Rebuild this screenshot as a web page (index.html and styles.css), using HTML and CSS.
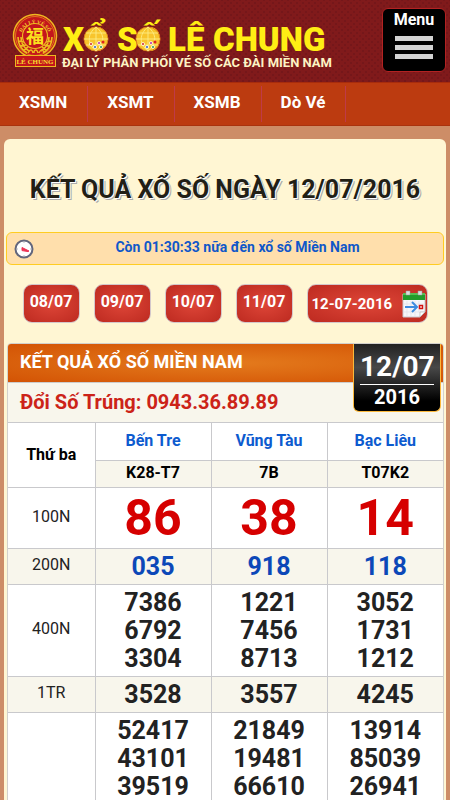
FILE: index.html
```html
<!DOCTYPE html>
<html lang="vi">

<head>
    <meta charset="UTF-8">
    <meta name="viewport" content="width=device-width, initial-scale=1.0">
    <title>Xổ Số Lê Chung</title>
    <link rel="stylesheet" href="styles.css">
</head>

<body>
    <header class="header">
        <a href="#" class="logo">
            <svg width="316" height="62" viewBox="0 0 316 62">
                <!-- seal -->
                <g fill="none" stroke="#edb91f">
                    <circle cx="23" cy="23" r="21.5" fill="#c4161c" stroke-width="1.5"/>
                    <circle cx="23" cy="23" r="19.5" stroke-width="0.6"/>
                    <circle cx="23" cy="23" r="12.5" stroke-width="1.2"/>
                    <path d="M6 24c0 8 4 13 9 16M9 24c0 6 3 11 8 14M6 28l6 1M8 33l6-1M12 37l4-3M40 24c0 8-4 13-9 16M37 24c0 6-3 11-8 14M40 28l-6 1M38 33l-6-1M34 37l-4-3" stroke-width="1.6"/>
                    <path d="M16 40c2-4 4-4 5 0M22 40c0-4 3-4 4 0M27 40c2-4 3-4 5-1" stroke-width="1.4"/>
                </g>
                <defs><path id="arc" d="M8.500 25a14.500 14.500 0 0 1 29 0"/></defs>
                <text class="seal-arc"><textPath href="#arc" startOffset="50%">ĐẠI LÝ VÉ SỐ</textPath></text>
                <text class="seal-sign" x="23" y="30">福</text>
                <rect x="3.5" y="42.500" width="40" height="11" fill="#c4161c" stroke="#edb91f"/>
                <text class="seal-name" x="23" y="51">LÊ CHUNG</text>
                <!-- brand -->
                <g class="brand">
                    <text x="51" y="38">X</text>
                    <text x="73" y="38">Ổ</text>
                    <text x="105" y="38">S</text>
                    <text x="126" y="38">Ố</text>
                    <text x="156" y="38">LÊ</text>
                    <text x="201" y="38">CHUNG</text>
                </g>
                <g id="ball">
                    <circle cx="84" cy="26" r="12" fill="#f8c52c" stroke="#d9821c"/>
                    <path d="M84 14v24M72 26h24M74 20h20M74 32h20M84 14c-9 7-9 17 0 24M84 14c9 7 9 17 0 24" fill="none" stroke="#fdec83" stroke-width="0.9"/>
                    <circle cx="79" cy="31" r="1.800" fill="#fff"/><circle cx="79" cy="31" r="1" fill="#c22"/>
                    <circle cx="83" cy="34" r="1.800" fill="#fff"/><circle cx="83" cy="34" r="1" fill="#285bc0"/>
                    <circle cx="87" cy="30" r="1.800" fill="#fff"/><circle cx="87" cy="30" r="1" fill="#b129a5"/>
                    <circle cx="89" cy="34" r="1.800" fill="#fff"/><circle cx="89" cy="34" r="1" fill="#219549"/>
                    <circle cx="91" cy="29" r="1.500" fill="#d22"/>
                </g>
                <use href="#ball" x="52"/>
                <text class="slogan" x="50" y="54">ĐẠI LÝ PHÂN PHỐI VÉ SỐ CÁC ĐÀI MIỀN NAM</text>
            </svg>
        </a>
        <button type="button" class="menu-button">Menu
            <span class="bar"></span>
            <span class="bar"></span>
            <span class="bar"></span>
        </button>
    </header>
    <nav class="nav">
        <a href="#">XSMN</a>
        <a href="#">XSMT</a>
        <a href="#">XSMB</a>
        <a href="#">Dò Vé</a>
    </nav>
    <main class="content">
        <h1>KẾT QUẢ XỔ SỐ NGÀY 12/07/2016</h1>
        <div class="countdown">
            <svg class="clock" width="20" height="20" viewBox="0 0 20 20">
                <circle cx="10" cy="10" r="8.500" fill="#fff" stroke="#62667c" stroke-width="2"/>
                <path d="M10 3v1M10 16v1M3 10h1M16 10h1" stroke="#bbb"/>
                <path d="M8 8.500l7 3.500-1 .6-6-1z" fill="#ee3354" stroke="#ee3354"/>
            </svg>
            <p>Còn 01:30:33 nữa đến xổ số Miền Nam</p>
        </div>
        <div class="days">
            <button type="button" class="day">08/07</button>
            <button type="button" class="day">09/07</button>
            <button type="button" class="day">10/07</button>
            <button type="button" class="day">11/07</button>
            <div class="date-picker">
                <input type="text" value="12-07-2016" aria-label="Chọn ngày">
                <svg width="24" height="28" viewBox="0 0 24 28">
                    <path d="M1 4h22v18l-5 5H1z" fill="#f6f6fa" stroke="#c9c9cf"/>
                    <path d="M1 3h22v7H1z" fill="#239b2b"/>
                    <path d="M1 3h22v2H1z" fill="#56bf50"/>
                    <path d="M4 1h4v4H4zM16 1h4v4h-4z" fill="#ddd" stroke="#999" stroke-width="0.5"/>
                    <path d="M5 11v15M9 11v15M13 11v15M17 11v11M2 14h20M2 22h20" stroke="#dfdfe8" stroke-width="0.6"/>
                    <path d="M3 17h11M10 12l5 5-5 5" fill="none" stroke="#3d8ce0" stroke-width="2"/>
                    <path d="M17.500 15.500h3v3h-3z" fill="#fff" stroke="#d31212" stroke-width="1.500"/>
                    <path d="M18 27v-5h5z" fill="#fff" stroke="#aaa" stroke-width="0.6"/>
                </svg>
            </div>
        </div>
        <section class="result">
            <div class="date-badge">
                <span class="badge-day">12/07</span>
                <span class="badge-year">2016</span>
            </div>
            <h2>KẾT QUẢ XỔ SỐ MIỀN NAM</h2>
            <p class="hotline">Đổi Số Trúng: 0943.36.89.89</p>
            <table>
                <thead>
                    <tr class="province">
                        <th rowspan="2">Thứ ba</th>
                        <th><a href="#">Bến Tre</a></th>
                        <th><a href="#">Vũng Tàu</a></th>
                        <th><a href="#">Bạc Liêu</a></th>
                    </tr>
                    <tr class="code">
                        <th>K28-T7</th>
                        <th>7B</th>
                        <th>T07K2</th>
                    </tr>
                </thead>
                <tbody>
                    <tr class="prize-8">
                        <th>100N</th>
                        <td>86</td>
                        <td>38</td>
                        <td>14</td>
                    </tr>
                    <tr class="prize-7 even">
                        <th>200N</th>
                        <td>035</td>
                        <td>918</td>
                        <td>118</td>
                    </tr>
                    <tr>
                        <th>400N</th>
                        <td>7386<br>6792<br>3304</td>
                        <td>1221<br>7456<br>8713</td>
                        <td>3052<br>1731<br>1212</td>
                    </tr>
                    <tr class="even">
                        <th>1TR</th>
                        <td>3528</td>
                        <td>3557</td>
                        <td>4245</td>
                    </tr>
                    <tr>
                        <th></th>
                        <td>52417<br>43101<br>39519</td>
                        <td>21849<br>19481<br>66610</td>
                        <td>13914<br>85039<br>26941</td>
                    </tr>
                </tbody>
            </table>
        </section>
    </main>
</body>

</html>
```

FILE: styles.css
```css
* {
    box-sizing: border-box;
}
body {
    font-family: Roboto, Arial, sans-serif;
    margin: 0;
    background-color: #cd8d67;
    color: #222;
}
a {
    text-decoration: none;
}
button, input {
    font-family: inherit;
    font-weight: bold;
    color: white;
}
.header {
    display: flex;
    justify-content: space-between;
    align-items: flex-start;
    height: 82px;
    padding: 8px 4px 0 12px;
    background-color: #801a1b;
    background-image: radial-gradient(#75171a 1px, transparent 1px), radial-gradient(#75171a 1px, transparent 1px);
    background-size: 6px 6px;
    background-position: 0 0, 3px 3px;
}
.logo {
    padding-top: 5px;
}
.logo svg {
    display: block;
    overflow: visible;
}
.seal-arc {
    font: bold 5px "Liberation Serif", serif;
    fill: #f4cf2c;
    text-anchor: middle;
}
.seal-sign {
    font: bold 18px "Noto Sans CJK TC", sans-serif;
    fill: #fbe01e;
    text-anchor: middle;
}
.seal-name {
    font: bold 7px "Liberation Serif", serif;
    fill: #f6dc2e;
    text-anchor: middle;
}
.brand {
    font-size: 33px;
    font-weight: 900;
    fill: #ffee14;
}
.slogan {
    font-size: 13px;
    font-weight: bold;
    fill: #fdf3c4;
}
.menu-button {
    display: flex;
    flex-direction: column;
    align-items: center;
    width: 64px;
    height: 64px;
    padding: 1px 0;
    gap: 4px;
    border: 1px solid #b22222;
    border-radius: 6px;
    background-color: black;
    font-size: 16px;
    line-height: 20px;
    cursor: pointer;
}
.bar {
    width: 38px;
    height: 5px;
    background-color: #d3d3d3;
}
.menu-button .bar:first-of-type {
    margin-top: 2px;
}
.nav {
    display: flex;
    height: 44px;
    padding: 3px 0;
    background-color: #bc3b10;
    border-top: 1px solid #a82c0c;
    border-bottom: 1px solid #a9330e;
}
.nav a {
    padding: 0 20px 0 19px;
    border-right: 1px solid #bf3a48;
    color: white;
    font-size: 17px;
    font-weight: bold;
    line-height: 33px;
}
.content {
    margin: 13px 4px 0;
    padding: 0 2px;
    border-radius: 6px 6px 0 0;
    background-color: #fff6d3;
}
h1 {
    margin: 0;
    padding: 35px 0 26px;
    color: #221f16;
    font-size: 25px;
    line-height: 32px;
    text-align: center;
    text-shadow: 1px 1px 0 white, 2px 2px 0 #aaa;
}
.countdown {
    display: flex;
    align-items: center;
    height: 33px;
    padding: 0 2px 0 7px;
    border: 1px solid #ffcc22;
    border-radius: 6px;
    background-color: #ffdfac;
}
.countdown p {
    flex: 1;
    margin: 0;
    padding-bottom: 3px;
    color: #0f57c9;
    font-size: 14px;
    font-weight: bold;
    text-align: center;
}
.days {
    display: flex;
    justify-content: center;
    gap: 14px;
    padding: 19px 0 20px;
}
.day, .date-picker {
    height: 39px;
    border: 1px solid #d3c7cb;
    border-radius: 9px;
    background: radial-gradient(#de4638, #bd2a20);
}
.day {
    width: 57px;
    padding: 0 0 4px;
    font-size: 16px;
    cursor: pointer;
}
.date-picker {
    display: flex;
    align-items: center;
    width: 121px;
    padding: 0 1px 0 4px;
}
.date-picker input {
    width: 90px;
    padding: 0;
    border: none;
    background: none;
    font-size: 15px;
}
.result {
    position: relative;
    margin-left: 1px;
    border: 1px solid #d2d0cc;
    border-radius: 4px 4px 0 0;
    background-color: white;
}
.date-badge {
    position: absolute;
    top: 0;
    right: 2px;
    width: 88px;
    height: 68px;
    padding: 6px 6px 0;
    border: 1px solid #fbb93b;
    border-top: none;
    border-radius: 0 0 6px 6px;
    background: linear-gradient(#222, #484848 35%, #000 85%);
    color: white;
    font-weight: bold;
    text-align: center;
}
.badge-day, .badge-year {
    display: block;
}
.badge-day {
    border-bottom: 1px solid white;
    font-size: 28px;
    line-height: 34px;
}
.badge-year {
    font-size: 20px;
    line-height: 25px;
}
h2 {
    margin: 0;
    padding: 0 12px 2px;
    border-radius: 3px 3px 0 0;
    background: radial-gradient(#e47b1d, #d35304);
    color: white;
    font-size: 18px;
    line-height: 36px;
}
.hotline {
    margin: 0;
    padding: 0 12px;
    border-top: 1px solid #cccccc;
    background-color: #f8f6ec;
    color: #cc2318;
    font-size: 20px;
    font-weight: bold;
    line-height: 39px;
}
table {
    width: 100%;
    table-layout: fixed;
    border-collapse: collapse;
}
th, td {
    padding: 4px 0 3px;
    border: 1px solid #c9c9cc;
    text-align: center;
}
th:first-child {
    border-left: none;
}
tr > :last-child {
    border-right: none;
}
thead th {
    color: black;
    font-size: 16px;
}
.province th:first-child {
    width: 87px;
}
.province th {
    height: 38px;
    padding: 0 0 2px;
}
.province a {
    color: #0d5bcf;
}
.code th {
    height: 27px;
    padding: 0 0 3px;
    border-left: 1px solid #c9c9cc;
    background-color: #f8f6ec;
}
tbody th {
    padding: 0 0 4px;
    font-size: 16px;
    font-weight: normal;
}
td {
    font-size: 25px;
    font-weight: bold;
    line-height: 28px;
}
.even {
    background-color: #f8f6ec;
}
.prize-8 td {
    padding: 0;
    color: #d60000;
    font-size: 50px;
    line-height: 60px;
}
.prize-7 td {
    color: #0c48b8;
}
```
